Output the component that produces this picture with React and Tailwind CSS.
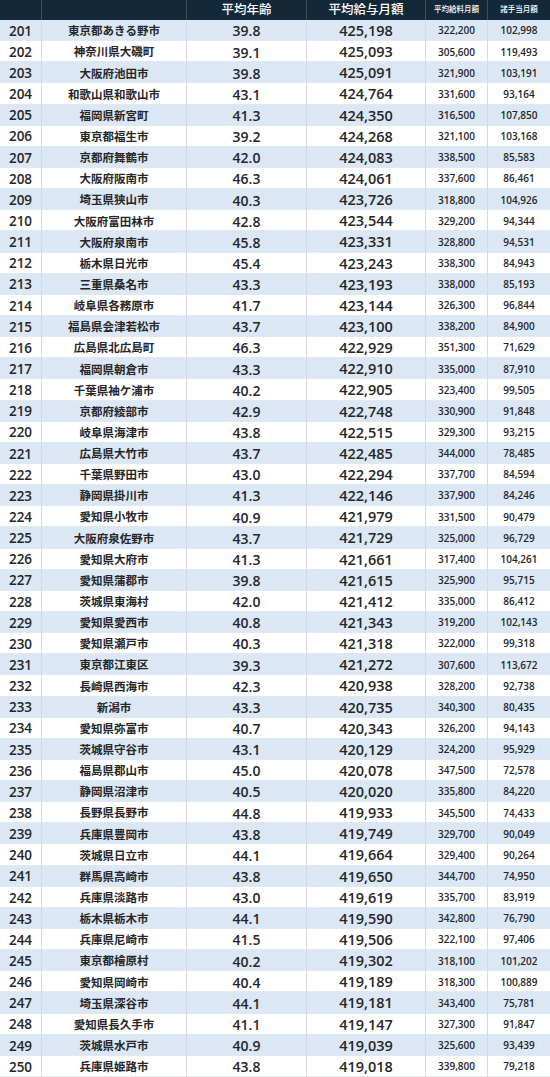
import React from "react";

const raw = `201 東京都あきる野市 39.8 425,198 322,200 102,998
202 神奈川県大磯町 39.1 425,093 305,600 119,493
203 大阪府池田市 39.8 425,091 321,900 103,191
204 和歌山県和歌山市 43.1 424,764 331,600 93,164
205 福岡県新宮町 41.3 424,350 316,500 107,850
206 東京都福生市 39.2 424,268 321,100 103,168
207 京都府舞鶴市 42.0 424,083 338,500 85,583
208 大阪府阪南市 46.3 424,061 337,600 86,461
209 埼玉県狭山市 40.3 423,726 318,800 104,926
210 大阪府富田林市 42.8 423,544 329,200 94,344
211 大阪府泉南市 45.8 423,331 328,800 94,531
212 栃木県日光市 45.4 423,243 338,300 84,943
213 三重県桑名市 43.3 423,193 338,000 85,193
214 岐阜県各務原市 41.7 423,144 326,300 96,844
215 福島県会津若松市 43.7 423,100 338,200 84,900
216 広島県北広島町 46.3 422,929 351,300 71,629
217 福岡県朝倉市 43.3 422,910 335,000 87,910
218 千葉県袖ケ浦市 40.2 422,905 323,400 99,505
219 京都府綾部市 42.9 422,748 330,900 91,848
220 岐阜県海津市 43.8 422,515 329,300 93,215
221 広島県大竹市 43.7 422,485 344,000 78,485
222 千葉県野田市 43.0 422,294 337,700 84,594
223 静岡県掛川市 41.3 422,146 337,900 84,246
224 愛知県小牧市 40.9 421,979 331,500 90,479
225 大阪府泉佐野市 43.7 421,729 325,000 96,729
226 愛知県大府市 41.3 421,661 317,400 104,261
227 愛知県蒲郡市 39.8 421,615 325,900 95,715
228 茨城県東海村 42.0 421,412 335,000 86,412
229 愛知県愛西市 40.8 421,343 319,200 102,143
230 愛知県瀬戸市 40.3 421,318 322,000 99,318
231 東京都江東区 39.3 421,272 307,600 113,672
232 長崎県西海市 42.3 420,938 328,200 92,738
233 新潟市 43.3 420,735 340,300 80,435
234 愛知県弥富市 40.7 420,343 326,200 94,143
235 茨城県守谷市 43.1 420,129 324,200 95,929
236 福島県郡山市 45.0 420,078 347,500 72,578
237 静岡県沼津市 40.5 420,020 335,800 84,220
238 長野県長野市 44.8 419,933 345,500 74,433
239 兵庫県豊岡市 43.8 419,749 329,700 90,049
240 茨城県日立市 44.1 419,664 329,400 90,264
241 群馬県高崎市 43.8 419,650 344,700 74,950
242 兵庫県淡路市 43.0 419,619 335,700 83,919
243 栃木県栃木市 44.1 419,590 342,800 76,790
244 兵庫県尼崎市 41.5 419,506 322,100 97,406
245 東京都檜原村 40.2 419,302 318,100 101,202
246 愛知県岡崎市 40.4 419,189 318,300 100,889
247 埼玉県深谷市 44.1 419,181 343,400 75,781
248 愛知県長久手市 41.1 419,147 327,300 91,847
249 茨城県水戸市 40.9 419,039 325,600 93,439
250 兵庫県姫路市 43.8 419,018 339,800 79,218`;

const rows = raw.split("\n").map((l) => l.trim().split(" "));

const grid = "grid grid-cols-[42px_145px_120px_119px_62px_62px]";

export default function App() {
  return (
    <div
      className="w-[550px] h-[1077px] flex flex-col bg-white text-[#262626]"
      style={{ fontFamily: '"Open Sans", "Noto Sans CJK JP", sans-serif' }}
    >
      <div className={`${grid} h-[20px] shrink-0 bg-[#13293a] text-white`}>
        <div className="border-r border-[#3a4f60]" />
        <div className="border-r border-[#3a4f60]" />
        <div className="border-r border-[#3a4f60] flex items-center justify-center text-[12.5px] font-medium">平均年齢</div>
        <div className="border-r border-[#3a4f60] flex items-center justify-center text-[12.5px] font-medium">平均給与月額</div>
        <div className="border-r border-[#3a4f60] flex items-center justify-center text-[7.5px] font-medium">平均給料月額</div>
        <div className="flex items-center justify-center text-[7.5px] font-medium">諸手当月額</div>
      </div>
      {rows.map((r, i) => (
        <div
          key={r[0]}
          className={`${grid} flex-1 min-h-0 border-b border-[#e3e8ee] ${i % 2 === 0 ? "bg-[#dbe7f5]" : "bg-white"}`}
        >
          <div className="border-r border-[#d3dae2] flex items-center justify-center text-[13.5px] font-semibold">{r[0]}</div>
          <div className="border-r border-[#d3dae2] flex items-center justify-center text-[11.5px] font-semibold">{r[1]}</div>
          <div className="border-r border-[#d3dae2] flex items-center justify-center text-[14px] font-semibold">{r[2]}</div>
          <div className="border-r border-[#d3dae2] flex items-center justify-center text-[14.5px] font-semibold">{r[3]}</div>
          <div className="border-r border-[#d3dae2] flex items-center justify-center text-[10px] font-semibold">{r[4]}</div>
          <div className="flex items-center justify-center text-[10px] font-semibold">{r[5]}</div>
        </div>
      ))}
    </div>
  );
}
